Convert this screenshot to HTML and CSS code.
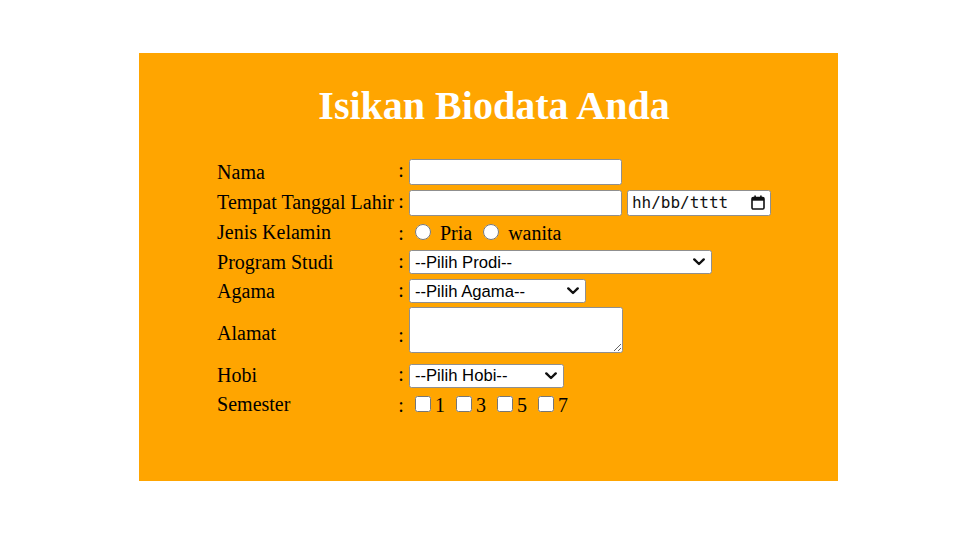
FILE: index.html
```html
<!DOCTYPE html>
<html lang="id">
<head>
<meta charset="utf-8">
<title>Biodata</title>
<link rel="stylesheet" href="styles.css">
</head>
<body>
<div class="card">
  <h1 class="title">Isikan Biodata Anda</h1>
  <table class="form">
    <tr><td class="lbl">Nama</td><td class="fld">: <input class="txt" type="text"></td></tr>
    <tr><td class="lbl">Tempat Tanggal Lahir</td><td class="fld">: <input class="txt" type="text"> <span class="date"><span class="date-text">hh/bb/tttt</span><svg class="cal" width="14" height="15" viewBox="0 0 14 15"><rect x="1" y="2.5" width="12" height="11.5" rx="1.3" fill="none" stroke="#111" stroke-width="1.6"/><rect x="1" y="2.5" width="12" height="3.2" fill="#111"/><rect x="3.3" y="0.5" width="1.6" height="3" fill="#111"/><rect x="9.1" y="0.5" width="1.6" height="3" fill="#111"/></svg></span></td></tr>
    <tr><td class="lbl">Jenis Kelamin</td><td class="fld">: <input class="rad" type="radio" name="jk"> Pria <input class="rad" type="radio" name="jk"> wanita</td></tr>
    <tr><td class="lbl">Program Studi</td><td class="fld">: <select class="sel sel-prodi"><option>--Pilih Prodi--</option></select></td></tr>
    <tr><td class="lbl">Agama</td><td class="fld">: <select class="sel sel-agama"><option>--Pilih Agama--</option></select></td></tr>
    <tr><td class="lbl">Alamat</td><td class="fld">: <textarea class="area"></textarea></td></tr>
    <tr><td class="lbl">Hobi</td><td class="fld">: <select class="sel sel-hobi"><option>--Pilih Hobi--</option></select></td></tr>
    <tr><td class="lbl">Semester</td><td class="fld">: <input class="chk" type="checkbox">1 <input class="chk" type="checkbox">3 <input class="chk" type="checkbox">5 <input class="chk" type="checkbox">7</td></tr>
  </table>
</div>
</body>
</html>
```
FILE: styles.css
```css
html, body {
  margin: 0;
  padding: 0;
  background: #ffffff;
}
body {
  font-family: "Liberation Serif", "Times New Roman", serif;
  font-size: 20px;
  color: #000;
}
.card {
  box-sizing: border-box;
  margin: 53px 0 0 139px;
  width: 699px;
  height: 428px;
  padding: 1px 0 0 11px;
  background: #ffa500;
}
.title {
  margin: 29px 0 27px;
  color: #fff;
  font-size: 40px;
  font-weight: bold;
  text-align: center;
  line-height: 46px;
}
.form {
  margin: 0 auto;
  border-spacing: 2.5px;
}
.form td {
  padding: 1.25px;
  white-space: nowrap;
}
.lbl {
  padding-right: 4px;
}
.txt {
  box-sizing: border-box;
  width: 213px;
  height: 26px;
  margin: 0;
  padding: 1px 3px;
  border: 1.5px solid #8f8f8f;
  border-radius: 2.5px;
  background: #fff;
  font-family: "Liberation Sans", Arial, sans-serif;
  font-size: 16.67px;
}
.date {
  box-sizing: border-box;
  display: inline-flex;
  align-items: center;
  justify-content: space-between;
  width: 144px;
  height: 26px;
  padding: 0 5px 0 4px;
  border: 1.5px solid #8f8f8f;
  border-radius: 2.5px;
  background: #fff;
  vertical-align: baseline;
}
.date-text {
  font-family: "DejaVu Sans Mono", "Liberation Mono", monospace;
  font-size: 16px;
  line-height: 20px;
  color: #111;
}
.cal {
  display: block;
}
.rad, .chk {
  width: 16px;
  height: 16px;
  margin: 4px 4px 0 6px;
}
.sel {
  box-sizing: border-box;
  -webkit-appearance: none;
  appearance: none;
  height: 24px;
  margin: 0;
  padding: 0 20px 0 5px;
  border: 1.5px solid #8f8f8f;
  border-radius: 2.5px;
  background-color: #fff;
  background-image: url("data:image/svg+xml,%3Csvg xmlns='http://www.w3.org/2000/svg' width='12' height='8' viewBox='0 0 12 8'%3E%3Cpath d='M1.3 1.4 L6 6 L10.7 1.4' fill='none' stroke='%23111' stroke-width='2.4' stroke-linecap='round' stroke-linejoin='round'/%3E%3C/svg%3E");
  background-repeat: no-repeat;
  background-position: right 6px center;
  background-size: 12px 8px;
  color: #000;
  font-family: "Liberation Sans", Arial, sans-serif;
  font-size: 16.67px;
}
.sel-prodi { width: 303px; }
.sel-agama { width: 177px; }
.sel-hobi { width: 155px; }
.area {
  box-sizing: border-box;
  width: 214px;
  height: 46px;
  margin: -1px 0 6px;
  border: 1.5px solid #8f8f8f;
  border-radius: 2.5px;
  background: #fff;
  vertical-align: -17px;
  font-family: "Liberation Mono", monospace;
  font-size: 16.67px;
}
```
